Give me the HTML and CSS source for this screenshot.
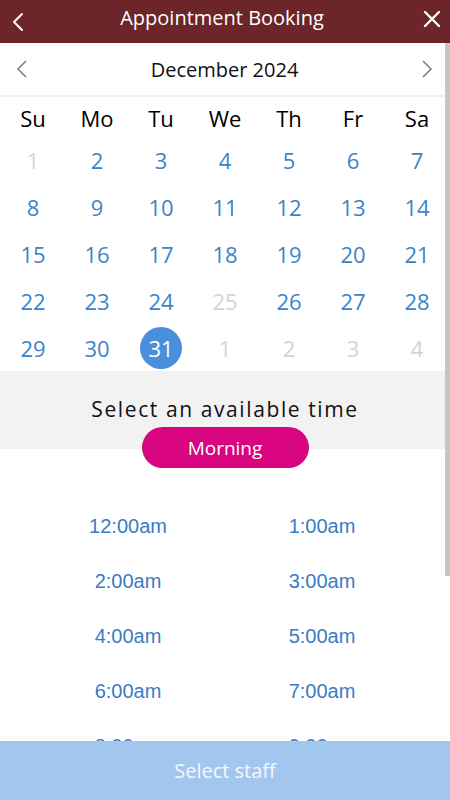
FILE: index.html
```html
<!DOCTYPE html>
<html lang="en">
<head>
    <meta charset="UTF-8">
    <meta name="viewport" content="width=device-width, initial-scale=1.0">
    <title>Appointment Booking</title>
    <link rel="stylesheet" href="styles.css">
</head>
<body>

    <!-- Header -->
    <div class="topbar">
        <svg class="top-icon" width="24" height="36" viewBox="0 0 24 36">
            <polyline points="22,10 14,18 22,26" fill="none" stroke="#fff" stroke-width="2" stroke-linecap="round" stroke-linejoin="round"/>
        </svg>
        <h1>Appointment Booking</h1>
        <svg class="top-icon" width="24" height="36" viewBox="0 0 24 36">
            <path d="M5 8 L19 22 M19 8 L5 22" stroke="#fff" stroke-width="2.4" stroke-linecap="round"/>
        </svg>
    </div>

    <div class="page">
        <div class="scroll-thumb"></div>

        <!-- Month -->
        <div class="month-row">
            <svg width="20" height="24" viewBox="0 0 20 24">
                <polyline points="14,4 6,12 14,20" fill="none" stroke="#7a7a7a" stroke-width="1.5"/>
            </svg>
            <span class="month-title">December 2024</span>
            <svg width="20" height="24" viewBox="0 0 20 24">
                <polyline points="6,4 14,12 6,20" fill="none" stroke="#7a7a7a" stroke-width="1.5"/>
            </svg>
        </div>

        <!-- Calendar -->
        <div class="calendar">
            <div class="weekday">Su</div>
            <div class="weekday">Mo</div>
            <div class="weekday">Tu</div>
            <div class="weekday">We</div>
            <div class="weekday">Th</div>
            <div class="weekday">Fr</div>
            <div class="weekday">Sa</div>

            <div class="day off">1</div>
            <div class="day">2</div>
            <div class="day">3</div>
            <div class="day">4</div>
            <div class="day">5</div>
            <div class="day">6</div>
            <div class="day">7</div>

            <div class="day">8</div>
            <div class="day">9</div>
            <div class="day">10</div>
            <div class="day">11</div>
            <div class="day">12</div>
            <div class="day">13</div>
            <div class="day">14</div>

            <div class="day">15</div>
            <div class="day">16</div>
            <div class="day">17</div>
            <div class="day">18</div>
            <div class="day">19</div>
            <div class="day">20</div>
            <div class="day">21</div>

            <div class="day">22</div>
            <div class="day">23</div>
            <div class="day">24</div>
            <div class="day off">25</div>
            <div class="day">26</div>
            <div class="day">27</div>
            <div class="day">28</div>

            <div class="day">29</div>
            <div class="day">30</div>
            <div class="day"><span class="selected">31</span></div>
            <div class="day off">1</div>
            <div class="day off">2</div>
            <div class="day off">3</div>
            <div class="day off">4</div>
        </div>

        <!-- Zaman seçimi -->
        <div class="time-head">
            <p>Select an available time</p>
            <button class="pill">Morning</button>
        </div>

        <div class="times">
            <a href="#">12:00am</a>
            <a href="#">1:00am</a>
            <a href="#">2:00am</a>
            <a href="#">3:00am</a>
            <a href="#">4:00am</a>
            <a href="#">5:00am</a>
            <a href="#">6:00am</a>
            <a href="#">7:00am</a>
            <a href="#">8:00am</a>
            <a href="#">9:00am</a>
        </div>
    </div>

    <button class="staff-btn">Select staff</button>

</body>
</html>
```

FILE: styles.css
```css
/* Genel */
* {
    margin: 0;
    padding: 0;
    box-sizing: border-box;
}

body {
    font-family: "Open Sans", Arial, sans-serif;
    background-color: #fff;
    width: 450px;
    height: 800px;
    overflow: hidden;
}

/* Header */
.topbar {
    height: 43px;
    background-color: #6c2528;
    display: flex;
    justify-content: space-between;
    align-items: center;
    padding: 0 6px 0 0;
    color: white;
}

.top-icon {
    flex-shrink: 0;
}

.topbar h1 {
    font-size: 20px;
    font-weight: 400;
    margin-top: -8px;
}

.page {
    position: relative;
}

.scroll-thumb {
    position: absolute;
    top: 0;
    right: 0;
    width: 5px;
    height: 533px;
    background-color: #c6c6c6;
    z-index: 5;
}

/* Month */
.month-row {
    height: 54px;
    display: flex;
    justify-content: space-between;
    align-items: center;
    padding: 0 13px 0 12px;
    border-bottom: 2px solid #efefef;
}

.month-title {
    font-size: 20px;
    color: #111;
    margin-top: 1px;
}

/* Calendar */
.calendar {
    display: grid;
    grid-template-columns: repeat(7, 64px);
    grid-template-rows: 39px repeat(5, 47px);
    padding-left: 1px;
}

.weekday {
    display: flex;
    justify-content: center;
    align-items: center;
    padding-top: 3px;
    font-size: 22px;
    color: #000;
}

.day {
    display: flex;
    justify-content: center;
    align-items: center;
    font-size: 22px;
    color: #3c84c9;
}

.day.off {
    color: #d4d4d4;
}

.selected {
    width: 42px;
    height: 42px;
    border-radius: 50%;
    background-color: #4a8fde;
    color: white;
    display: flex;
    justify-content: center;
    align-items: center;
}

/* Time section */
.time-head {
    display: flow-root;
    background-color: #f2f2f2;
    padding-top: 24px;
    text-align: center;
}

.time-head p {
    font-size: 21px;
    letter-spacing: 1.6px;
    line-height: 28px;
    color: #111;
}

.pill {
    display: block;
    width: 167px;
    height: 41px;
    margin: 4px auto -19px;
    border: none;
    border-radius: 21px;
    background-color: #d9047f;
    color: white;
    font-family: "Open Sans", Arial, sans-serif;
    font-size: 19px;
    position: relative;
    z-index: 2;
}

.times {
    display: grid;
    grid-template-columns: 1fr 1fr;
    grid-auto-rows: 55px;
    padding: 50px 31px 0;
}

.times a {
    display: flex;
    justify-content: center;
    align-items: center;
    font-family: "Liberation Sans", Arial, sans-serif;
    font-size: 20px;
    color: #3a7cc3;
    text-decoration: none;
}

/* Bottom */
.staff-btn {
    position: fixed;
    left: 0;
    bottom: 0;
    width: 450px;
    height: 59px;
    border: none;
    background-color: #a3c6ee;
    color: #f4f8fd;
    font-family: "Open Sans", Arial, sans-serif;
    font-size: 20px;
    z-index: 10;
}
```
